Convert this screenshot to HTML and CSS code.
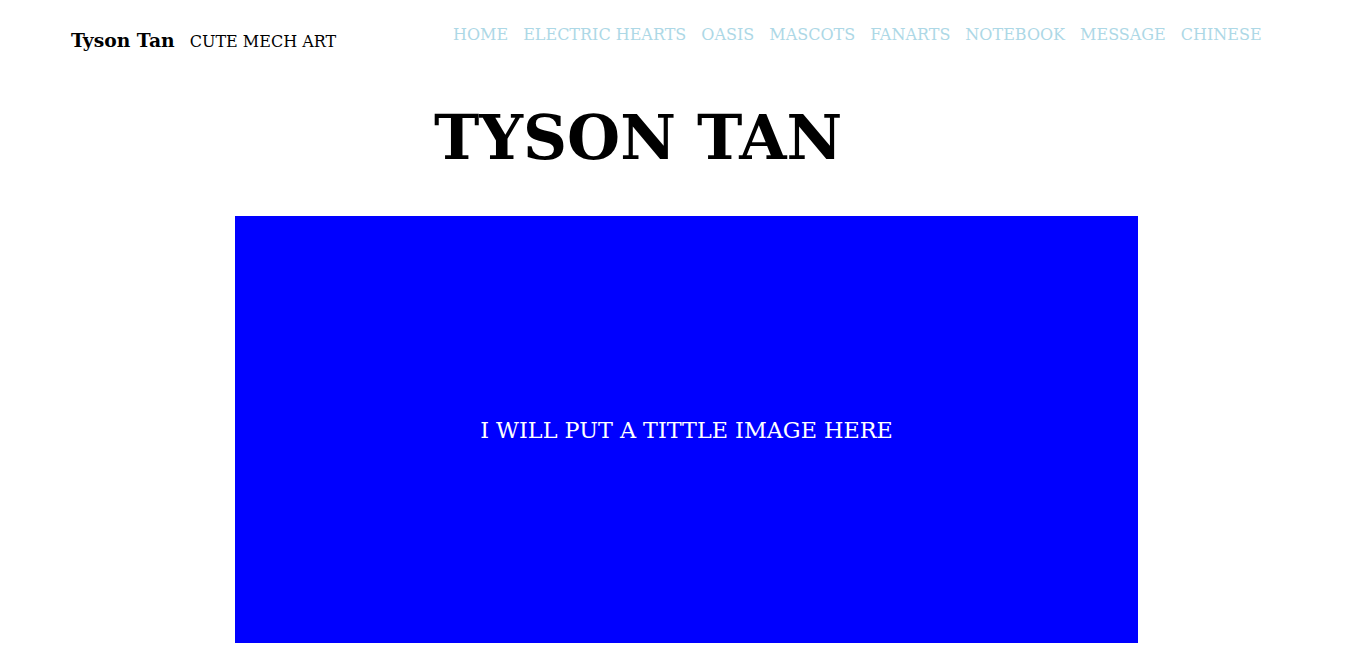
FILE: index.html
```html
<!DOCTYPE html>
<html>
<head>
<meta charset="utf-8">
<link rel="stylesheet" href="styles.css">
</head>
<body>
<header class="topbar">
  <div class="brand">
    <span class="brand-name">Tyson Tan</span>
    <span class="brand-tag">CUTE MECH ART</span>
  </div>
  <nav class="nav">
    <a href="#">HOME</a>
    <a href="#">ELECTRIC HEARTS</a>
    <a href="#">OASIS</a>
    <a href="#">MASCOTS</a>
    <a href="#">FANARTS</a>
    <a href="#">NOTEBOOK</a>
    <a href="#">MESSAGE</a>
    <a href="#">CHINESE</a>
  </nav>
</header>
<h1 class="title">TYSON TAN</h1>
<div class="hero">I WILL PUT A TITTLE IMAGE HERE</div>
</body>
</html>
```
FILE: styles.css
```css
html, body {
  margin: 0;
  padding: 0;
  background: #fff;
  font-family: "DejaVu Serif", serif;
  color: #000;
}
.topbar {
  display: flex;
  align-items: flex-start;
  padding-left: 71px;
  height: 84px;
}
.brand {
  display: flex;
  align-items: baseline;
  gap: 15px;
  margin-top: 31px;
  line-height: 1;
  width: 382px;
}
.brand-name {
  font-weight: bold;
  font-size: 18.72px;
}
.brand-tag {
  font-size: 16px;
}
.nav {
  display: flex;
  gap: 15px;
  margin-top: 27px;
  line-height: 1;
}
.nav a {
  color: #add8e6;
  text-decoration: none;
  font-size: 16px;
}
.title {
  margin: 23px 0 0;
  padding-left: 434px;
  font-size: 61px;
  font-weight: bold;
  line-height: 1;
}
.hero {
  margin: 48px 0 0 235px;
  width: 903px;
  height: 427px;
  background: #0000ff;
  color: #fff;
  font-size: 22.3px;
  display: flex;
  align-items: center;
  justify-content: center;
}
```
